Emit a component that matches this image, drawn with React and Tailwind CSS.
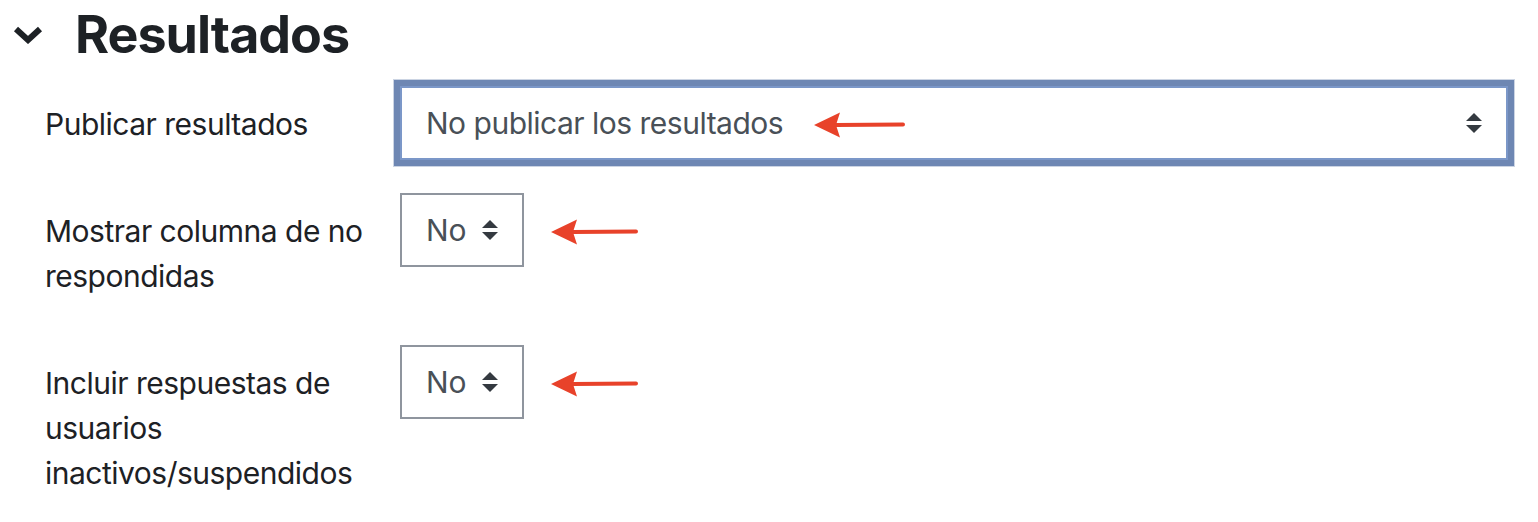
import React from "react";

const FONT = { fontFamily: "Inter, 'Noto Sans', 'Liberation Sans', sans-serif" };

function UpDown() {
  return (
    <svg width="16" height="20" viewBox="0 0 4 5" className="shrink-0">
      <path d="M2 0L0 2h4zm0 5L0 3h4z" fill="#343a40" />
    </svg>
  );
}

function Arrow({ className, length = 90 }) {
  return (
    <svg width={length + 2} height="28" viewBox={`0 0 ${length + 2} 28`} className={className}>
      <path d="M0 14 L26 1.5 L22 14 L26 26.5 Z" fill="#e8422a" />
      <path d={`M22 14 L${length} 13.5`} stroke="#e8422a" strokeWidth="4" strokeLinecap="round" />
    </svg>
  );
}

function Label({ children }) {
  return (
    <div className="w-[355px] shrink-0 py-4 pr-6 text-[30px] leading-[45px] tracking-[-0.5px] text-[#1d2125]">
      {children}
    </div>
  );
}

function SmallSelect() {
  return (
    <div className="relative flex items-start">
      <div className="flex h-[74px] w-[124px] items-center justify-between border-2 border-[#8f959e] bg-white pl-6 pr-6 text-[30px] text-[#495057]">
        <span>No</span>
        <UpDown />
      </div>
      <Arrow length={85} className="absolute left-[151px] top-[25px]" />
    </div>
  );
}

export default function App() {
  return (
    <div className="h-[522px] w-full overflow-hidden bg-white" style={FONT}>
      {/* section header */}
      <div className="flex items-center pt-1">
        <div className="flex w-[75px] justify-start pl-[13px]">
          <svg width="30" height="18" viewBox="0 0 30 18">
            <path
              d="M3 3 L15 14 L27 3"
              fill="none"
              stroke="#1d2125"
              strokeWidth="6"
              strokeLinejoin="miter"
            />
          </svg>
        </div>
        <h3 className="text-[52px] font-bold leading-[1.2] tracking-[-1px] text-[#1d2125]">
          Resultados
        </h3>
      </div>

      <div className="mt-[20px] flex flex-col gap-[30px] pl-[45px] pr-[30px]">
        <div className="flex items-start">
          <Label>Publicar resultados</Label>
          <div className="relative flex-1">
            <div className="flex h-[74px] items-center justify-between border-2 border-[#7b97c8] bg-white pl-6 pr-6 text-[30px] text-[#495057] shadow-[0_0_0_6px_#6e87b3,0_0_0_7px_#cbd4e3]">
              <span className="tracking-[-0.5px]">No publicar los resultados</span>
              <UpDown />
            </div>
            <Arrow length={89} className="absolute left-[414px] top-[25px]" />
          </div>
        </div>

        <div className="flex items-start">
          <Label>
            Mostrar columna de no
            <br />
            respondidas
          </Label>
          <SmallSelect />
        </div>

        <div className="flex items-start">
          <Label>
            Incluir respuestas de
            <br />
            usuarios
            <br />
            inactivos/suspendidos
          </Label>
          <SmallSelect />
        </div>
      </div>
    </div>
  );
}
